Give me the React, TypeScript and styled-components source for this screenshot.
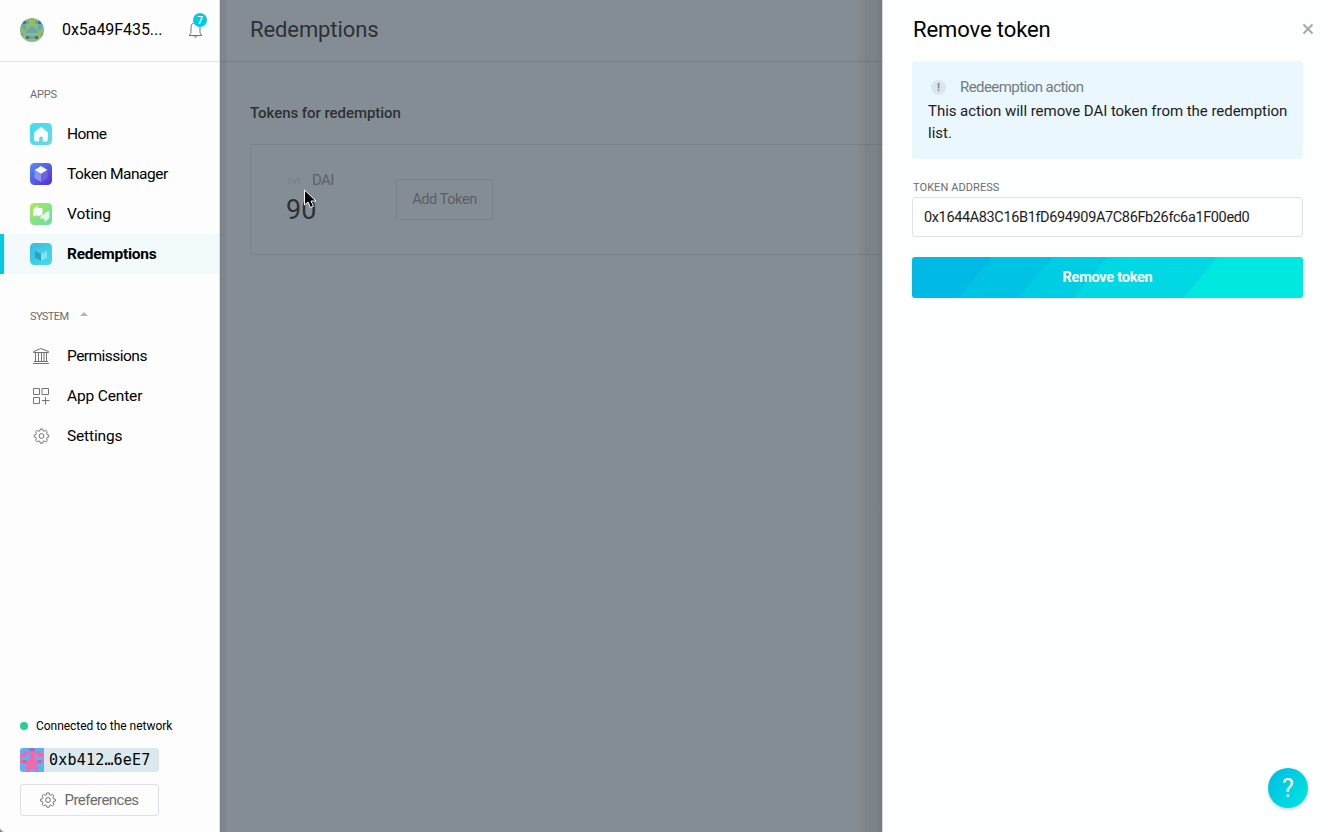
import React from 'react';
import styled, { createGlobalStyle } from 'styled-components';

const GlobalStyle = createGlobalStyle`
  *, *::before, *::after { box-sizing: border-box; }
  body { margin: 0; background: #fdfefe; overflow: hidden; font-family: Roboto, "Liberation Sans", sans-serif; color: #000; }
  button, input { font: inherit; }
  h1, h2, h3, p { margin: 0; font-weight: 400; }
  svg { display: block; flex: none; }
`;

type TypeProps = { $ls?: number };
const Label = styled.span<TypeProps>`
  white-space: nowrap;
  letter-spacing: ${p => p.$ls ?? 0}px;
`;

const Shell = styled.div`
  display: grid;
  grid-template-columns: 220px 662px 444px;
  height: 832px;
  width: 1326px;
`;

const Sidebar = styled.aside`
  display: flex;
  flex-direction: column;
  background: radial-gradient(circle at 100% 0, transparent 4.5px, #8583b4 5.5px) 0 100% / 5px 5px no-repeat, #fdfdfd;
  border-right: 1px solid #d9dcde;
`;
const Account = styled.div`
  display: flex;
  align-items: center;
  height: 62px;
  padding: 0 16px 2px 20px;
  border-bottom: 1px solid #e2e4e5;
  font-size: 16px;
`;
const Address = styled.span`
  margin-left: 18px;
  letter-spacing: -0.06px;
  flex: 1;
`;
const Bell = styled.div`
  position: relative;
  margin-top: -2px;
`;
const Badge = styled.span`
  position: absolute;
  top: -7px;
  left: 5px;
  width: 14px;
  height: 14px;
  border-radius: 50%;
  background: #00cbe6;
  color: #fff;
  font-size: 10px;
  font-weight: 500;
  line-height: 15px;
  text-align: center;
`;
const SectionTitle = styled.div<{ $top: number }>`
  display: flex;
  align-items: center;
  gap: 12px;
  height: 16px;
  margin-top: ${p => p.$top}px;
  padding-left: 30px;
  font-size: 11px;
  color: #6d6d6d;
`;
const Caret = styled.i`
  margin-bottom: 4px;
  border: 4px solid transparent;
  border-top: 0;
  border-bottom-color: #b5b5b5;
`;
const Nav = styled.nav<{ $top: number }>`
  display: flex;
  flex-direction: column;
  margin-top: ${p => p.$top}px;
`;
const NavItem = styled.a<{ $active?: boolean }>`
  display: flex;
  align-items: center;
  gap: 15px;
  height: 40px;
  padding-left: 30px;
  font-size: 15.5px;
  font-weight: ${p => (p.$active ? 700 : 400)};
  background: ${p => (p.$active ? '#f3fafb' : 'transparent')};
  box-shadow: ${p => (p.$active ? 'inset 4px 0 #00cbe6' : 'none')};
`;
const Footer = styled.footer`
  display: flex;
  flex-direction: column;
  align-items: flex-start;
  margin-top: auto;
  padding: 0 0 16px 20px;
`;
const Status = styled.div`
  display: flex;
  align-items: center;
  gap: 8px;
  height: 16px;
  font-size: 12px;
  &::before { content: ''; width: 8px; height: 8px; border-radius: 50%; background: #21d48e; }
`;
const IdentityBadge = styled.div`
  display: flex;
  align-items: center;
  gap: 5px;
  width: 139px;
  height: 24px;
  margin: 14px 0 12px;
  overflow: hidden;
  border-radius: 3px;
  background: #dbe8ed;
  font-family: "DejaVu Sans Mono", monospace;
  font-size: 15px;
  line-height: 26px;
`;
const Preferences = styled.button`
  display: flex;
  align-items: center;
  justify-content: center;
  gap: 8px;
  width: 139px;
  height: 32px;
  padding: 0;
  border: 1px solid #dfe1e2;
  border-radius: 3px;
  background: #fdfdfd;
  color: #6d6d6d;
  font-size: 15px;
`;

const Main = styled.main`
  background: linear-gradient(90deg, #7c848a 0, #7f878d 6px, #858d94 7px, #858d94 calc(100% - 24px), #81898f calc(100% - 23px), #80888e calc(100% - 18px), #7c848a calc(100% - 17px), #7b8388 calc(100% - 7px), #757d82 100%);
  color: #2c3136;
`;
const MainHeader = styled.header`
  height: 62px;
  padding: 0 30px;
  border-bottom: 1px solid rgba(0, 10, 20, 0.09);
  font-size: 22px;
  line-height: 60px;
`;
const TokensTitle = styled.h3`
  margin: 42px 0 21px 30px;
  font-size: 15px;
  line-height: 19px;
  height: 19px;
  font-weight: 500 !important;
`;
const TokenCard = styled.section`
  display: flex;
  margin-left: 30px;
  height: 111px;
  border: 1px solid rgba(0, 10, 20, 0.08);
  border-right: 0;
  border-radius: 3px 0 0 3px;
`;
const Token = styled.div`
  position: relative;
  width: 145px;
  padding: 25px 0 0 36px;
`;
const TokenName = styled.div`
  display: flex;
  align-items: center;
  gap: 12px;
  height: 20px;
  padding-left: 1px;
  font-size: 15px;
  color: #5b6268;
`;
const Amount = styled.div`
  margin-left: -1px;
  font-size: 27px;
  line-height: 41px;
`;
const Cursor = styled.svg`
  position: absolute;
  left: 52px;
  top: 44px;
`;
const AddToken = styled.button`
  width: 97px;
  height: 41px;
  margin-top: 34px;
  padding: 0;
  border: 1px solid #7a8288;
  border-radius: 3px;
  background: none;
  color: #596066;
  font-size: 14.5px;
`;

const Panel = styled.section`
  position: relative;
  display: flex;
  flex-direction: column;
  padding: 0 23px 0 29px;
  background: #fdfefe;
  border-left: 1px solid #dadddf;
`;
const PanelHeader = styled.header`
  display: flex;
  align-items: center;
  justify-content: space-between;
  height: 61px;
  margin-right: -11px;
  padding: 0 0 2px 1px;
  font-size: 22px;
  svg { margin-top: -1px; }
`;
const Info = styled.div`
  height: 98px;
  padding: 15px 16px;
  border-radius: 4px;
  background: #eaf7fe;
  font-size: 15px;
  line-height: 22px;
  color: #1c1c1c;
`;
const InfoTitle = styled.div`
  display: flex;
  align-items: center;
  gap: 14px;
  height: 22px;
  padding-left: 3px;
  color: #737b80;
  margin-bottom: 2px;
`;
const Alert = styled.i`
  width: 15px;
  height: 15px;
  border-radius: 50%;
  background: #d9e6ec;
  color: #7b868c;
  font: 700 11px/15px Roboto, sans-serif;
  text-align: center;
`;
const FieldLabel = styled.label`
  margin-top: 20px;
  height: 18px;
  padding-left: 1px;
  line-height: 18px;
  font-size: 11px;
  color: #6d6d6d;
`;
const Field = styled.input`
  width: 391px;
  height: 40px;
  padding: 0 11px;
  border: 1px solid #e0e2e3;
  border-radius: 3px;
  background: #fdfefe;
  color: #1c1c1c;
  font-size: 14.5px;
  letter-spacing: -0.37px;
`;
const Submit = styled.button`
  width: 391px;
  height: 41px;
  margin-top: 20px;
  padding: 0;
  border: 0;
  border-radius: 3px;
  color: #fff;
  font-size: 14.5px;
  font-weight: 700;
  background: linear-gradient(130deg, #00b9e4 0 18.8%, #00c2e5 18.9% 33%, #00cce4 33.1% 46%, #00d9e3 46.1% 71.8%, #00e8e0 71.9%);
`;
const Help = styled.button`
  position: absolute;
  right: 18px;
  bottom: 24px;
  width: 40px;
  height: 40px;
  padding: 0;
  border: 0;
  border-radius: 50%;
  color: #fff;
  font-size: 25px;
  font-weight: 400;
  line-height: 41px;
  background: linear-gradient(130deg, #00bfe3 10%, #00e2e0 90%);
  box-shadow: 0 2px 3px rgba(0, 0, 0, 0.15);
`;

const Pixels = ({ rows, colors, round }: { rows: string[]; colors: Record<string, string>; round?: boolean }) => (
  <svg width="24" height="24" viewBox="0 0 8 8" shapeRendering="crispEdges" style={{ borderRadius: round ? '50%' : 0 }}>
    {rows.flatMap((row, y) => [...row].map((c, x) => <rect key={`${x}-${y}`} x={x} y={y} width="1" height="1" fill={colors[c]} />))}
  </svg>
);

const Gear = ({ size }: { size: number }) => (
  <svg width={size} height={size} viewBox="0 0 16 16" fill="none" stroke="#737373" strokeWidth="1">
    <path d="M6.8 1h2.4l.4 1.8 1.2.5 1.6-1 1.6 1.6-1 1.6.5 1.2 1.800.4v2l-1.800.4-.5 1.200 1 1.600-1.600 1.600-1.600-1-1.200.5-.4 1.800H6.800l-.4-1.800-1.200-.5-1.600 1L2 12.300l1-1.600-.500-1.200L.7 9.100v-2l1.800-.4.500-1.200-1-1.600 1.600-1.600 1.600 1 1.200-.5z" />
    <circle cx="8" cy="8" r="2.400" />
  </svg>
);

const AppIcon = ({ id, from, to, children }: { id: string; from: string; to: string; children: React.ReactNode }) => (
  <svg width="22" height="22" viewBox="0 0 22 22">
    <defs>
      <linearGradient id={id} x1="0" y1="0" x2="1" y2="1"><stop stopColor={from} /><stop offset="1" stopColor={to} /></linearGradient>
    </defs>
    <rect width="22" height="22" rx="4.500" fill={`url(#${id})`} />
    {children}
  </svg>
);

const SystemIcon = ({ children }: { children: React.ReactNode }) => (
  <svg width="22" height="22" viewBox="0 0 22 22" fill="none" stroke="#737373" strokeWidth="1">{children}</svg>
);

const avatar = ['gbggggbg', 'gdbggbdg', 'bbggggbb', 'gbgbbgbg', 'ggbbbbgg', 'bggggggb', 'ggdbbdgg', 'gggggggg'];
const identity = ['bbbppbbb', 'bkkkkkkb', 'kkbkkbkk', 'bbbkkbbb', 'kpkkkkpk', 'bbkkkkbb', 'bbkkkkbb', 'bbkbbkbb'];

export default function App() {
  return (
    <>
      <GlobalStyle />
      <Shell>
        <Sidebar>
          <Account>
            <Pixels round rows={avatar} colors={{ g: '#8fba70', b: '#62a9b5', d: '#526d80' }} />
            <Address>0x5a49F435...</Address>
            <Bell>
              <svg width="15" height="18" viewBox="0 0 15 18" fill="none" stroke="#737373"><path d="M1 15.500h13c-1.500-1-2-2.200-2-4V7.500C12 4 10 2.500 7.500 2.500S3 4 3 7.500v4c0 1.800-.5 3-2 4zM6 15.500c0 2.500 3 2.500 3 0" /></svg>
              <Badge>7</Badge>
            </Bell>
          </Account>
          <SectionTitle $top={24}><Label $ls={-0.15}>APPS</Label></SectionTitle>
          <Nav $top={12}>
            <NavItem>
              <AppIcon id="home" from="#3fdaf8" to="#67dbe3"><path d="M11 3.800l6.800 5.700v7q0 2-2 2h-3V15q0-1.600-1.800-1.600T9.200 15v3.500h-3q-2 0-2-2v-7z" fill="#fff" /></AppIcon>
              <Label $ls={-0.6}>Home</Label>
            </NavItem>
            <NavItem>
              <AppIcon id="manager" from="#5091f4" to="#5a29d6"><path d="M11 3l6.500 4-6.500 4-6.500-4z" fill="#f4f6fe" /><path d="M4.500 7l6.500 4v8l-6.500-4z" fill="#8a94ee" /><path d="M17.500 7L11 11v8l6.500-4z" fill="#6f63e0" /></AppIcon>
              <Label $ls={-0.46}>Token Manager</Label>
            </NavItem>
            <NavItem>
              <AppIcon id="voting" from="#a8ed55" to="#67dcae"><path d="M3 6.500L7.500 2.800 8 5h4.500v6L8 13.500 7.500 12 3.500 13.500z" fill="#fff" /><path d="M10.500 12.500l4-1.500.5-1.500 4.300-1.500v7L15 19l-1-3.500-3.500.5z" fill="#e2f9e8" /></AppIcon>
              <Label $ls={-0.1}>Voting</Label>
            </NavItem>
            <NavItem $active>
              <AppIcon id="redemptions" from="#36bce4" to="#47dce5"><path d="M11 4.500l6 3.200-6 3.300-6-3.300z" fill="#4acbe8" /><path d="M5 7.700l6 3.300v7l-6-3.500z" fill="#2aa3c2" /><path d="M17 7.700L11 11v7l6-3.500z" fill="#79e8f3" /></AppIcon>
              <Label $ls={-0.27}>Redemptions</Label>
            </NavItem>
          </Nav>
          <SectionTitle $top={34}><Label $ls={-0.6}>SYSTEM</Label><Caret /></SectionTitle>
          <Nav $top={12}>
            <NavItem>
              <SystemIcon><path d="M3.500 7.500v-1L11 3.500l7.500 3v1zM5.500 8v8M8.500 8v8M11.500 8v8M14 8v8M16.500 8v8M4 16.500h14M3 18.500h16" /></SystemIcon>
              <Label $ls={-0.53}>Permissions</Label>
            </NavItem>
            <NavItem>
              <SystemIcon><path d="M3.500 3.500h6v6h-6zM12 3.500h6.500v6H12zM3.500 12.500h6v6h-6zM15.500 12v7.500M12 15.500h7.500" /></SystemIcon>
              <Label $ls={-0.15}>App Center</Label>
            </NavItem>
            <NavItem>
              <SystemIcon><svg x="3.500" y="3" width="16" height="16"><Gear size={16} /></svg></SystemIcon>
              <Label $ls={-0.15}>Settings</Label>
            </NavItem>
          </Nav>
          <Footer>
            <Status><Label $ls={-0.03}>Connected to the network</Label></Status>
            <IdentityBadge>
              <Pixels rows={identity} colors={{ b: '#5ab2fb', k: '#ec6baa', p: '#8a78c6' }} />
              <Label $ls={0.2}>0xb412…6eE7</Label>
            </IdentityBadge>
            <Preferences><Gear size={16} /><Label $ls={-0.55}>Preferences</Label></Preferences>
          </Footer>
        </Sidebar>
        <Main>
          <MainHeader><Label $ls={-0.1}>Redemptions</Label></MainHeader>
          <TokensTitle><Label $ls={-0.05}>Tokens for redemption</Label></TokensTitle>
          <TokenCard>
            <Token>
              <TokenName>
                <svg width="12" height="9" viewBox="0 0 12 9" fill="none" stroke="#648784"><path d="M1.500 8V1.500L5 4.500V8M10.500 8V1.500L7 4.500V8M5 5l1 1 1-1" /></svg>
                <Label $ls={-0.6}>DAI</Label>
              </TokenName>
              <Amount><Label>90</Label></Amount>
              <Cursor width="14" height="20" viewBox="0 0 14 20"><path d="M1.500 1v15l3.500-3 2.500 5.500 3-1.300L8 12h5z" fill="#000" stroke="#fff" /></Cursor>
            </Token>
            <AddToken><Label $ls={-0.4}>Add Token</Label></AddToken>
          </TokenCard>
        </Main>
        <Panel>
          <PanelHeader>
            <Label $ls={-0.1}>Remove token</Label>
            <svg width="12" height="12" viewBox="0 0 12 12" stroke="#a0a6aa" strokeWidth="1.800"><path d="M1.500 1.500l9 9M10.500 1.500l-9 9" /></svg>
          </PanelHeader>
          <Info>
            <InfoTitle><Alert>!</Alert><Label $ls={-0.56}>Redeemption action</Label></InfoTitle>
            <Label $ls={-0.04}>This action will remove DAI token from the redemption</Label><br /><Label>list.</Label>
          </Info>
          <FieldLabel><Label $ls={0.08}>TOKEN ADDRESS</Label></FieldLabel>
          <Field readOnly value="0x1644A83C16B1fD694909A7C86Fb26fc6a1F00ed0" />
          <Submit><Label $ls={-0.25}>Remove token</Label></Submit>
          <Help>?</Help>
        </Panel>
      </Shell>
    </>
  );
}
